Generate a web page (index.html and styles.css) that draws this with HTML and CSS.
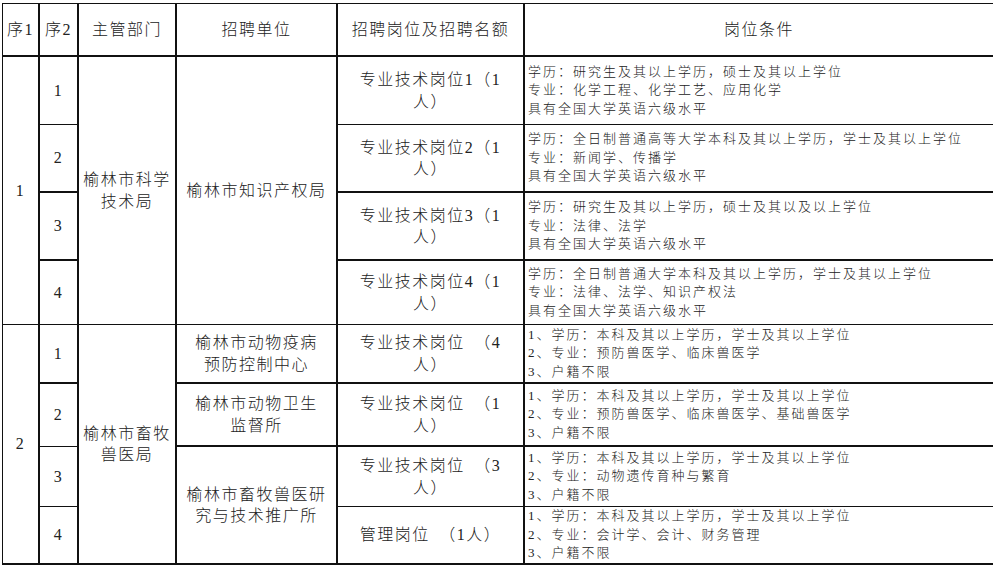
FILE: index.html
```html
<!DOCTYPE html>
<html lang="zh-CN">
<head>
<meta charset="utf-8">
<title>招聘岗位表</title>
<link rel="stylesheet" href="styles.css">
</head>
<body>
<div class="sheet">
  <div class="c h">序1</div>
  <div class="c h">序2</div>
  <div class="c h">主管部门</div>
  <div class="c h">招聘单位</div>
  <div class="c h">招聘岗位及招聘名额</div>
  <div class="c h last">岗位条件</div>

  <div class="c r4">1</div>
  <div class="c">1</div>
  <div class="c r4"><div class="t">榆林市科学<br>技术局</div></div>
  <div class="c r4"><div class="t">榆林市知识产权局</div></div>
  <div class="c"><div class="t">专业技术岗位1（1<br>人）</div></div>
  <div class="c cond"><div class="t">学历：研究生及其以上学历，硕士及其以上学位<br>专业：化学工程、化学工艺、应用化学<br>具有全国大学英语六级水平</div></div>

  <div class="c tb">2</div>
  <div class="c tb"><div class="t">专业技术岗位2（1<br>人）</div></div>
  <div class="c cond tb"><div class="t">学历：全日制普通高等大学本科及其以上学历，学士及其以上学位<br>专业：新闻学、传播学<br>具有全国大学英语六级水平</div></div>

  <div class="c tb">3</div>
  <div class="c tb"><div class="t">专业技术岗位3（1<br>人）</div></div>
  <div class="c cond tb"><div class="t">学历：研究生及其以上学历，硕士及其以及以上学位<br>专业：法律、法学<br>具有全国大学英语六级水平</div></div>

  <div class="c">4</div>
  <div class="c"><div class="t">专业技术岗位4（1<br>人）</div></div>
  <div class="c cond"><div class="t">学历：全日制普通大学本科及其以上学历，学士及其以上学位<br>专业：法律、法学、知识产权法<br>具有全国大学英语六级水平</div></div>

  <div class="c r4 tb">2</div>
  <div class="c tb">1</div>
  <div class="c r4 tb"><div class="t">榆林市畜牧<br>兽医局</div></div>
  <div class="c tb"><div class="t">榆林市动物疫病<br>预防控制中心</div></div>
  <div class="c tb"><div class="t">专业技术岗位&ensp;（4<br>人）</div></div>
  <div class="c cond tb"><div class="t">1、学历：本科及其以上学历，学士及其以上学位<br>2、专业：预防兽医学、临床兽医学<br>3、户籍不限</div></div>

  <div class="c">2</div>
  <div class="c tb"><div class="t">榆林市动物卫生<br>监督所</div></div>
  <div class="c tb"><div class="t">专业技术岗位&ensp;（1<br>人）</div></div>
  <div class="c cond tb"><div class="t">1、学历：本科及其以上学历，学士及其以上学位<br>2、专业：预防兽医学、临床兽医学、基础兽医学<br>3、户籍不限</div></div>

  <div class="c">3</div>
  <div class="c r2 tb"><div class="t">榆林市畜牧兽医研<br>究与技术推广所</div></div>
  <div class="c"><div class="t">专业技术岗位&ensp;（3<br>人）</div></div>
  <div class="c cond"><div class="t">1、学历：本科及其以上学历，学士及其以上学位<br>2、专业：动物遗传育种与繁育<br>3、户籍不限</div></div>

  <div class="c tb">4</div>
  <div class="c tb"><div class="t">管理岗位&ensp;（1人）</div></div>
  <div class="c cond tb"><div class="t">1、学历：本科及其以上学历，学士及其以上学位<br>2、专业：会计学、会计、财务管理<br>3、户籍不限</div></div>
</div>
</body>
</html>
```

FILE: styles.css
```css
html, body {
  margin: 0;
  padding: 0;
  background: #ffffff;
}

.sheet {
  display: grid;
  grid-template-columns: 37px 39px 98px 161px 187px 468px;
  grid-template-rows: 53px 68px 68px 68px 64px 59px 63px 60px 58px;
  width: max-content;
  margin: 3px 0 0 2px;
  border-top: 1px solid #111;
  border-left: 1px solid #111;
  font-family: "Liberation Serif", "Noto Sans CJK SC", serif;
  font-weight: 300;
  color: #222;
}

.c {
  box-sizing: border-box;
  display: flex;
  align-items: center;
  justify-content: center;
  text-align: center;
  border-right: 2px solid #111;
  border-bottom: 1px solid #111;
  font-size: 16px;
  letter-spacing: 1.5px;
  line-height: 21.5px;
  white-space: nowrap;
  overflow: hidden;
}

.h {
  border-bottom-width: 2px;
}

.last {
  border-right: none;
}

.tb {
  border-bottom-width: 2px;
}

.r4 {
  grid-row: span 4;
}

.r2 {
  grid-row: span 2;
}

.cond {
  justify-content: flex-start;
  text-align: left;
  border-right: none;
  padding-left: 3px;
  font-size: 13px;
  letter-spacing: 2px;
  line-height: 18.5px;
}
```
